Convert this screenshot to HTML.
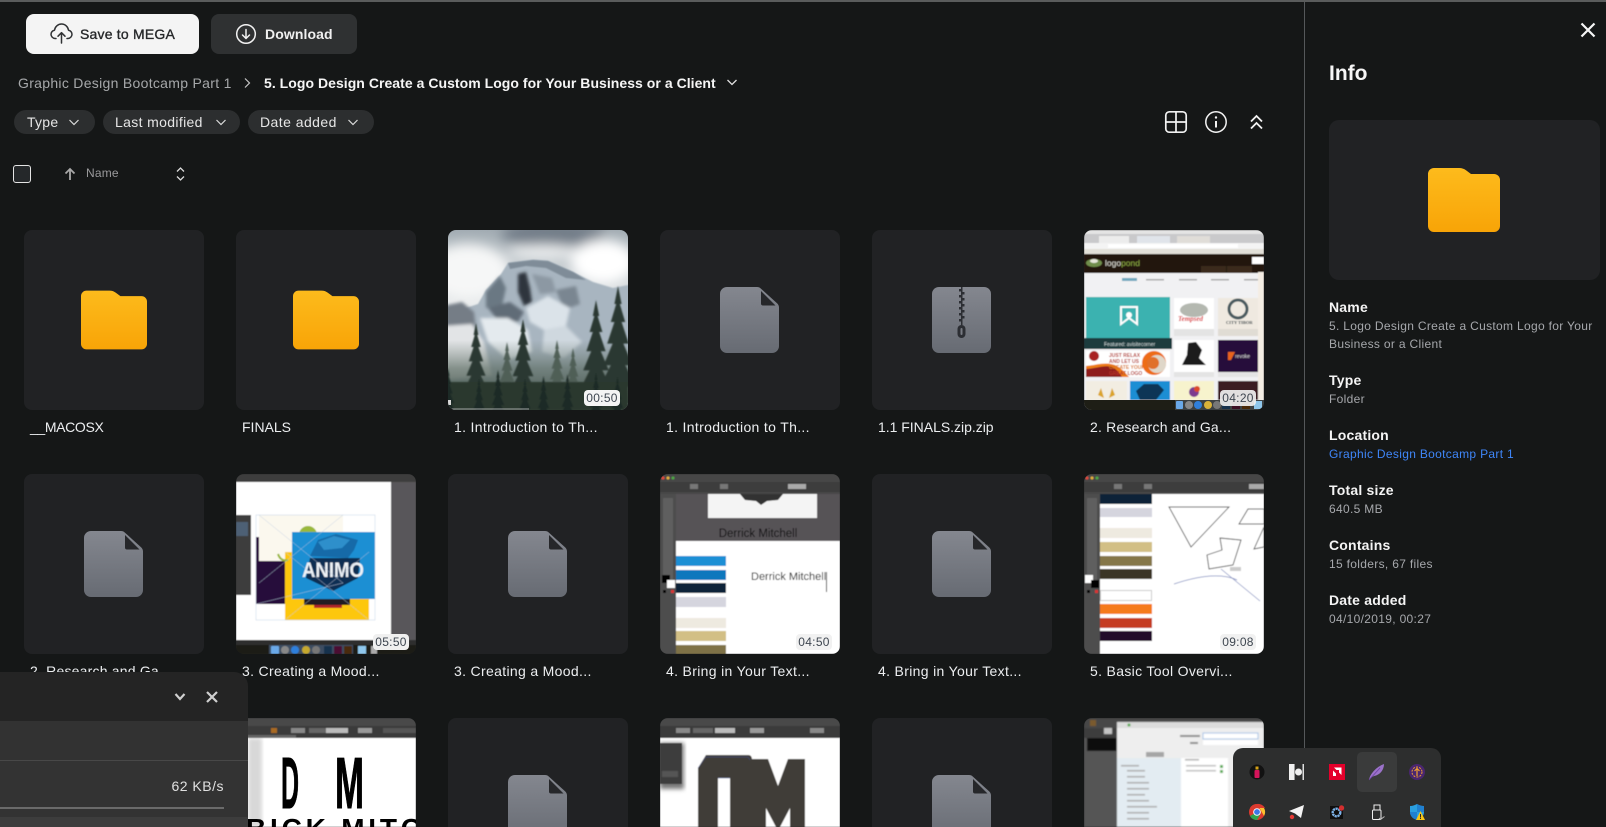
<!DOCTYPE html>
<html><head><meta charset="utf-8"><title>MEGA folder</title>
<style>
html,body{margin:0;padding:0;width:1606px;height:827px;overflow:hidden;background:#151717}
body{position:relative;font-family:"Liberation Sans",sans-serif;color:#eee}
.a{position:absolute}
.t{position:absolute;white-space:nowrap}
.tile{position:absolute;width:180px;height:180px;border-radius:8px;background:#212224;overflow:hidden}
.r3{height:109px;border-radius:8px 8px 0 0}
.tile svg.th{position:absolute;left:0;top:0;width:180px;height:180px}
.tile.r3 svg.th{height:109px}
.ic{position:absolute}
.lb{position:absolute;white-space:nowrap;font-size:14px;line-height:20px;color:#eceef0;letter-spacing:.33px}
.bd{position:absolute;width:36px;height:16px;border-radius:4px;font-size:12px;line-height:16px;text-align:center;color:#3e4650;background:#f4f4f4;letter-spacing:.3px}
.pill{position:absolute;top:110px;height:24px;border-radius:12px;background:#2c2e2f}
.pt{position:absolute;top:110px;line-height:24px;font-size:14px;color:#e6e6e6;letter-spacing:.45px;white-space:nowrap}
.il{position:absolute;left:1329px;font-size:14px;font-weight:700;line-height:18px;color:#f4f4f4;white-space:nowrap;letter-spacing:.2px}
.iv{position:absolute;left:1329px;font-size:12px;line-height:18px;color:#a6a8ac;white-space:nowrap;letter-spacing:.32px}
</style></head><body>
<svg width="0" height="0" style="position:absolute"><defs>
<linearGradient id="fo" x1="0" y1="0" x2="0" y2="1"><stop offset="0" stop-color="#fdbb1c"/><stop offset="1" stop-color="#f8a407"/></linearGradient>
<linearGradient id="fi" x1="0" y1="0" x2="0" y2="1"><stop offset="0" stop-color="#84878f"/><stop offset="1" stop-color="#676b73"/></linearGradient>
<linearGradient id="sky" x1="0" y1="0" x2="0" y2="1"><stop offset="0" stop-color="#a2acb3"/><stop offset=".4" stop-color="#e6e9ea"/></linearGradient>
<linearGradient id="fog" x1="0" y1="0" x2="0" y2="1"><stop offset="0" stop-color="#6b7a72" stop-opacity="0"/><stop offset=".4" stop-color="#5d6d64" stop-opacity=".7"/><stop offset="1" stop-color="#33423a"/></linearGradient>
<symbol id="folder" viewBox="0 0 72 64"><path fill="url(#fo)" d="M6 0H31c3 0 5 .8 7 2.3L43 6H66a6 6 0 0 1 6 6V58a6 6 0 0 1-6 6H6a6 6 0 0 1-6-6V6a6 6 0 0 1 6-6z"/></symbol>
<symbol id="file" viewBox="0 0 59 66"><path fill="url(#fi)" d="M7 0H37c1.500 0 3 .6 4 1.700L57.300 16.500c1.100 1.100 1.700 2.500 1.700 4V59a7 7 0 0 1-7 7H7a7 7 0 0 1-7-7V7a7 7 0 0 1 7-7z"/><path fill="#26272a" d="M41 4L55.500 18.500H43a2 2 0 0 1-2-2z"/></symbol>
<symbol id="tree" viewBox="0 0 20 60"><polygon points="10,0 12,10 11,10 14,20 12,20 16,32 13,32 18,44 14,44 20,56 11,56 11,60 9,60 9,56 0,56 6,44 2,44 7,32 4,32 8,20 6,20 9,10 8,10"/></symbol>
<filter id="b1"><feGaussianBlur stdDeviation="6"/></filter>
<filter id="b2"><feGaussianBlur stdDeviation="2"/></filter>
<filter id="b3"><feGaussianBlur stdDeviation=".45"/></filter>
<filter id="b4"><feGaussianBlur stdDeviation=".8"/></filter>
<filter id="b5"><feGaussianBlur stdDeviation="1.700"/></filter>
<filter id="b6"><feGaussianBlur stdDeviation=".7"/></filter>
</defs></svg>

<!-- top line and divider -->
<div class="a" style="left:0;top:0;width:1606px;height:2px;background:#5a5c5c"></div>
<div class="a" style="left:1304px;top:2px;width:1px;height:825px;background:#55585a"></div>

<!-- header buttons -->
<div class="a" style="left:26px;top:14px;width:173px;height:40px;border-radius:8px;background:#f4f4f4"></div>
<svg class="ic" style="left:50px;top:23px" width="23" height="21" viewBox="0 0 23 21" fill="none" stroke="#303234" stroke-width="1.500" stroke-linecap="round" stroke-linejoin="round"><path d="M6 15.500H5.200C2.900 15.500 1 13.600 1 11.300c0-2 1.500-3.800 3.500-4.100C5 3.700 8 1 11.500 1c3.600 0 6.500 2.700 7 6.200 2 .3 3.500 2.100 3.500 4.100 0 2.300-1.900 4.200-4.200 4.200H17"/><path d="M11.500 20V10M8 13.200l3.500-3.500 3.500 3.500"/></svg>
<div class="t" style="left:80px;top:24px;font-size:14px;line-height:20px;color:#26282a;letter-spacing:.2px;-webkit-text-stroke:.35px #26282a">Save to MEGA</div>
<div class="a" style="left:211px;top:14px;width:146px;height:40px;border-radius:8px;background:#2f3132"></div>
<svg class="ic" style="left:235px;top:23px" width="22" height="22" viewBox="0 0 22 22" fill="none" stroke="#f2f2f2" stroke-width="1.500" stroke-linecap="round" stroke-linejoin="round"><circle cx="11" cy="11" r="9.300"/><path d="M11 6.500V15.500M7.500 12l3.500 3.500 3.500-3.500"/></svg>
<div class="t" style="left:265px;top:24px;font-size:14px;font-weight:700;line-height:20px;color:#f0f0f0;letter-spacing:.1px">Download</div>

<!-- breadcrumb -->
<div class="t" style="left:18px;top:73px;font-size:14px;line-height:20px;color:#a6a8aa;letter-spacing:.3px">Graphic Design Bootcamp Part 1</div>
<svg class="ic" style="left:243px;top:77px" width="9" height="12" viewBox="0 0 9 12" fill="none" stroke="#c8c8c8" stroke-width="1.200"><path d="M2 1.500L6.500 6 2 10.500"/></svg>
<div class="t" style="left:264px;top:73px;font-size:14px;font-weight:700;line-height:20px;color:#f6f6f6;letter-spacing:.04px">5. Logo Design Create a Custom Logo for Your Business or a Client</div>
<svg class="ic" style="left:726px;top:78px" width="12" height="9" viewBox="0 0 12 9" fill="none" stroke="#e0e0e0" stroke-width="1.300"><path d="M1.500 2L6 6.500 10.500 2"/></svg>

<!-- filter pills -->
<div class="pill" style="left:14px;width:81px"></div>
<div class="pill" style="left:103px;width:137px"></div>
<div class="pill" style="left:248px;width:126px"></div>
<div class="pt" style="left:27px;letter-spacing:.25px">Type</div>
<div class="pt" style="left:115px;letter-spacing:.35px">Last modified</div>
<div class="pt" style="left:260px">Date added</div>
<svg class="ic" style="left:68px;top:118px" width="12" height="9" viewBox="0 0 12 9" fill="none" stroke="#dcdcdc" stroke-width="1.200"><path d="M1.500 2L6 6.500 10.500 2"/></svg>
<svg class="ic" style="left:215px;top:118px" width="12" height="9" viewBox="0 0 12 9" fill="none" stroke="#dcdcdc" stroke-width="1.200"><path d="M1.500 2L6 6.500 10.500 2"/></svg>
<svg class="ic" style="left:347px;top:118px" width="12" height="9" viewBox="0 0 12 9" fill="none" stroke="#dcdcdc" stroke-width="1.200"><path d="M1.500 2L6 6.500 10.500 2"/></svg>

<!-- view icons -->
<svg class="ic" style="left:1164px;top:110px" width="24" height="24" viewBox="0 0 24 24" fill="none" stroke="#f2f2f2" stroke-width="1.700"><rect x="1.800" y="1.800" width="20.400" height="20.400" rx="3.500"/><path d="M12 2V22M2 12H22"/></svg>
<svg class="ic" style="left:1204px;top:110px" width="24" height="24" viewBox="0 0 24 24" fill="none" stroke="#f2f2f2" stroke-width="1.500"><circle cx="12" cy="12" r="10.200"/><path d="M12 11V17.500" stroke-width="2"/><circle cx="12" cy="7.500" r="1.200" fill="#f2f2f2" stroke="none"/></svg>
<svg class="ic" style="left:1249px;top:114px" width="15" height="16" viewBox="0 0 15 16" fill="none" stroke="#f2f2f2" stroke-width="1.800"><path d="M2 7.500L7.500 2 13 7.500M2 14.500L7.500 9 13 14.500"/></svg>

<!-- checkbox & sort -->
<div class="a" style="left:13px;top:165px;width:16px;height:16px;border:1px solid #e4e4e4;border-radius:3px;background:#25282a"></div>
<svg class="ic" style="left:63px;top:167px" width="14" height="14" viewBox="0 0 14 14" fill="none" stroke="#a8a8a8" stroke-width="1.800"><path d="M7 13V2M2.500 6.500L7 2l4.500 4.500"/></svg>
<div class="t" style="left:86px;top:165px;font-size:12px;line-height:16px;color:#9a9a9c;letter-spacing:.2px">Name</div>
<svg class="ic" style="left:175px;top:166px" width="11" height="16" viewBox="0 0 11 16" fill="none" stroke="#dcdcdc" stroke-width="1.300"><path d="M2 5.500L5.500 2 9 5.500M2 10.500L5.500 14 9 10.500"/></svg>

<!-- ROW 1 -->
<div class="tile" style="left:24px;top:230px"><svg class="ic" style="left:57px;top:60px" width="66" height="60"><use href="#folder"/></svg></div>
<div class="lb" style="left:30px;top:417px;letter-spacing:-.35px">__MACOSX</div>
<div class="tile" style="left:236px;top:230px"><svg class="ic" style="left:57px;top:60px" width="66" height="60"><use href="#folder"/></svg></div>
<div class="lb" style="left:242px;top:417px;letter-spacing:0">FINALS</div>

<div class="tile" style="left:448px;top:230px">
<svg class="th" viewBox="0 0 180 180">
<rect width="180" height="180" fill="url(#sky)"/>
<g filter="url(#b1)"><ellipse cx="20" cy="42" rx="42" ry="28" fill="#f6f7f7"/><ellipse cx="105" cy="4" rx="52" ry="13" fill="#727d88"/><ellipse cx="155" cy="32" rx="32" ry="22" fill="#fff"/><ellipse cx="95" cy="22" rx="35" ry="7" fill="#eef0f1"/></g>
<path d="M-5 88L18 78 30 74 38 60 53 44 60 33 85 30 100 31 125 42 145 52 165 58 185 54V180H-5z" fill="#a8b5c0" filter="url(#b6)"/>
<path d="M60 33L85 30 100 31 125 42 138 50 118 48 98 38 78 36 62 39z" fill="#7f8c98" filter="url(#b6)"/>
<g filter="url(#b5)">
<path d="M70 44L78 42 82 58 84 72 76 76 70 62z" fill="#2f363c"/>
<path d="M38 62L52 46 58 58 54 76 38 78z" fill="#6b7883"/>
<path d="M84 44L104 48 108 62 92 64z" fill="#8c98a3"/>
<path d="M108 60L128 56 132 74 116 80z" fill="#7a8691"/>
<path d="M40 78L62 72 76 82 70 92 48 88z" fill="#606c77"/>
<path d="M78 78L100 66 122 78 118 96 96 100 82 92z" fill="#dbe3e9"/>
<path d="M32 88L60 88 80 100 84 122 60 130 40 112z" fill="#e4eaee"/>
<path d="M96 100L118 96 134 112 116 128 94 122z" fill="#cfd8df"/>
<path d="M-5 76L14 72 26 82 28 100 -5 100z" fill="#747d86"/>
<path d="M-5 96L24 94 36 112 44 146 -5 150z" fill="#e2e4e6"/>
</g>
<rect y="110" width="180" height="70" fill="url(#fog)"/>
<g filter="url(#b6)">
<g fill="#4f5f56"><use href="#tree" x="50" y="112" width="18" height="54"/><use href="#tree" x="100" y="110" width="18" height="54"/><use href="#tree" x="116" y="118" width="18" height="54"/></g>
<g fill="#2a3932"><use href="#tree" x="16" y="88" width="24" height="82"/><use href="#tree" x="62" y="83" width="26" height="90"/><use href="#tree" x="132" y="64" width="32" height="108"/><use href="#tree" x="152" y="50" width="36" height="120"/></g>
<rect y="152" width="180" height="28" fill="#2a382f"/>
<g fill="#1f2c27"><use href="#tree" x="-8" y="138" width="16" height="48"/><use href="#tree" x="24" y="148" width="14" height="42"/><use href="#tree" x="42" y="140" width="16" height="48"/><use href="#tree" x="70" y="148" width="14" height="42"/><use href="#tree" x="88" y="146" width="15" height="44"/><use href="#tree" x="112" y="144" width="15" height="45"/><use href="#tree" x="140" y="142" width="16" height="48"/><use href="#tree" x="162" y="146" width="15" height="44"/></g>
</g>
<rect x="0" y="170" width="3" height="5" fill="#d8d8d8"/><rect x="2" y="178.500" width="79" height="1" fill="#a0a4a4"/>
</svg></div>
<div class="bd" style="left:584px;top:390px">00:50</div>
<div class="lb" style="left:454px;top:417px">1. Introduction to Th...</div>

<div class="tile" style="left:660px;top:230px"><svg class="ic" style="left:60px;top:57px" width="59" height="66"><use href="#file"/></svg></div>
<div class="lb" style="left:666px;top:417px">1. Introduction to Th...</div>

<div class="tile" style="left:872px;top:230px"><svg class="ic" style="left:60px;top:57px" width="59" height="66" viewBox="0 0 59 66"><rect width="59" height="66" rx="7" fill="url(#fi)"/><rect x="29" y="0" width="1.500" height="38" fill="#2c2e33"/><g fill="#2c2e33"><rect x="27" y="2" width="2" height="2.500"/><rect x="30.500" y="5" width="2" height="2.500"/><rect x="27" y="8" width="2" height="2.500"/><rect x="30.500" y="11" width="2" height="2.500"/><rect x="27" y="14" width="2" height="2.500"/><rect x="30.500" y="17" width="2" height="2.500"/><rect x="27" y="20" width="2" height="2.500"/><rect x="30.500" y="23" width="2" height="2.500"/><rect x="27" y="26" width="2" height="2.500"/><rect x="30.500" y="29" width="2" height="2.500"/><rect x="27" y="32" width="2" height="2.500"/></g><rect x="25.500" y="38" width="8" height="13" rx="4" fill="#2c2e33"/><rect x="28.500" y="41" width="2" height="7" rx="1" fill="#777a82"/></svg></div>
<div class="lb" style="left:878px;top:417px;letter-spacing:-.02px">1.1 FINALS.zip.zip</div>

<div class="tile" style="left:1084px;top:230px">
<svg class="th" viewBox="0 0 180 180"><g filter="url(#b3)">
<rect width="180" height="180" fill="#f1f1f3"/>
<rect width="180" height="4" fill="#e4e4e4"/><rect y="4" width="180" height="9" fill="#c9c9cb"/><rect x="15" y="6" width="30" height="7" fill="#ececec"/><rect x="53" y="6" width="33" height="7" fill="#e0e4ea"/><rect x="93" y="6" width="33" height="7" fill="#e0ddd8"/>
<rect y="13" width="180" height="6" fill="#f4f4f4"/><rect x="24" y="14" width="130" height="4" fill="#fff"/><rect y="19" width="180" height="5" fill="#e2e0d8"/>
<rect y="24" width="180" height="19" fill="#221509"/><ellipse cx="10" cy="33" rx="8" ry="4" fill="#6f8e4c"/><ellipse cx="10" cy="31" rx="4" ry="2" fill="#e6e6da"/>
<text x="21" y="36" font-size="8.500" fill="#dcdcd4" font-family="Liberation Sans">logo<tspan fill="#8aa845">pond</tspan></text>
<rect x="168" y="27" width="12" height="7" fill="#fff"/><rect x="117" y="36" width="25" height="7" fill="#3a2b1c"/><rect x="143" y="36" width="25" height="7" fill="#3a2b1c"/>
<rect x="38" y="48" width="15" height="3" fill="#6fa9bf"/><rect x="62" y="49" width="18" height="1.500" fill="#aaa"/><rect x="95" y="49" width="18" height="1.500" fill="#aaa"/><rect x="127" y="49" width="18" height="1.500" fill="#aaa"/><rect x="160" y="49" width="18" height="1.500" fill="#aaa"/>
<rect x="2" y="67" width="84" height="52" fill="#3ab2b0"/><path d="M37 77H53V94L45 88 37 94z" fill="none" stroke="#fff" stroke-width="2"/><circle cx="45" cy="85" r="3" fill="#fff"/>
<rect x="0" y="108" width="88" height="11" fill="#1e3a3c"/><text x="20" y="116" font-size="5" fill="#cfdcdc" font-family="Liberation Sans">Featured: avisitecorner</text>
<rect x="90" y="68" width="40" height="31" fill="#fff"/><rect x="90" y="99" width="40" height="7" fill="#e4e4e4"/><ellipse cx="110" cy="80" rx="14" ry="7" fill="#b4b8b0"/><text x="94" y="91" font-size="7" font-weight="700" fill="#d92027" font-family="Liberation Serif" font-style="italic">Tempsed</text>
<rect x="134" y="68" width="40" height="31" fill="#efe9e0"/><rect x="134" y="99" width="40" height="7" fill="#e0dcd4"/><circle cx="154" cy="79" r="9" fill="none" stroke="#4a5a5e" stroke-width="3"/><text x="142" y="94" font-size="4.500" font-weight="700" fill="#2c3a40" font-family="Liberation Serif">CITY TIBOR</text>
<rect x="2" y="121" width="84" height="26" fill="#fff"/><path d="M2 147V136C20 138 26 128 40 147z" fill="#8e1e1e"/><path d="M2 136C20 134 30 128 45 147H38C28 130 18 138 2 139z" fill="#ee7d16"/><circle cx="10" cy="126" r="5" fill="#a82323"/><text x="25" y="127" font-size="5" font-weight="700" fill="#b5332a" font-family="Liberation Sans">JUST RELAX</text><text x="25" y="133" font-size="5" font-weight="700" fill="#b5332a" font-family="Liberation Sans">AND LET US</text><text x="25" y="139" font-size="5" font-weight="700" fill="#d8731e" font-family="Liberation Sans">CREATE YOUR</text><text x="25" y="145" font-size="5" font-weight="700" fill="#b5332a" font-family="Liberation Sans">GREAT LOGO</text>
<ellipse cx="70" cy="133" rx="12" ry="12" fill="#ed6c17"/><circle cx="73" cy="134" r="9" fill="#dfd7c9"/><circle cx="69" cy="133" r="6" fill="#e0702a"/>
<rect x="90" y="110" width="40" height="32" fill="#fff"/><rect x="90" y="142" width="40" height="5" fill="#e4e4e4"/><path d="M104 113L112 112 118 120 115 128 122 135H98L103 125z" fill="#1e1e1e"/>
<rect x="134" y="110" width="40" height="32" fill="#25103a"/><rect x="134" y="142" width="40" height="5" fill="#e4e4e4"/><path d="M144 122H151L147 130H144z" fill="#e8631e"/><text x="151" y="128" font-size="5" fill="#ddd" font-family="Liberation Sans">revoke</text>
<rect x="2" y="151" width="41" height="19" fill="#f2ede2"/><path d="M17 158L14 165 20 168zM28 158L31 165 25 168z" fill="#dba42a"/>
<rect x="46" y="151" width="40" height="19" fill="#1a8ed4"/><path d="M52 161L60 154 74 154 80 160 72 170H56z" fill="#0f3456"/>
<rect x="90" y="151" width="40" height="19" fill="#f7f3cd"/><circle cx="110" cy="162" r="5" fill="#7b3b8f"/><circle cx="113" cy="159" r="3" fill="#db4a2b"/>
<rect x="134" y="151" width="40" height="19" fill="#3a1e24"/>
<rect x="174" y="42" width="6" height="128" fill="#f4ede4"/>
</g>
<rect y="170" width="180" height="10" fill="#1e1e16"/><rect x="91" y="170" width="89" height="10" fill="#3d4142"/>
<rect x="92" y="171" width="7" height="8" rx="1" fill="#6aa9e8"/><circle cx="105" cy="175" r="4" fill="#888"/><circle cx="114" cy="175" r="4" fill="#2f7fdb"/><circle cx="124" cy="175" r="4" fill="#d9b239"/><circle cx="133" cy="175" r="4" fill="#777"/><rect x="138" y="171" width="8" height="8" fill="#17334e"/><rect x="148" y="171" width="8" height="8" fill="#3c1024"/><rect x="158" y="171" width="8" height="8" fill="#4a2a08"/><rect x="170" y="171" width="8" height="8" fill="#8fc7ec"/>
</svg></div>
<div class="bd" style="left:1220px;top:390px;background:rgba(240,240,240,.92)">04:20</div>
<div class="lb" style="left:1090px;top:417px;letter-spacing:.2px">2. Research and Ga...</div>

<!-- ROW 2 -->
<div class="tile" style="left:24px;top:474px"><svg class="ic" style="left:60px;top:57px" width="59" height="66"><use href="#file"/></svg></div>
<div class="lb" style="left:30px;top:661px;letter-spacing:.2px">2. Research and Ga...</div>

<div class="tile" style="left:236px;top:474px">
<svg class="th" viewBox="0 0 180 180"><g filter="url(#b3)">
<rect width="180" height="8" fill="#3c3c3c"/><rect y="8" width="155" height="159" fill="#fff"/><rect x="155" y="8" width="25" height="159" fill="#59565a"/>
<rect x="0" y="41" width="15" height="80" fill="#3c3c3e"/><rect x="0" y="48" width="12" height="14" fill="#4d6074"/>
<rect x="23" y="41" width="84" height="68" fill="#fbf8ee"/><rect x="20" y="63" width="30" height="67" fill="#25103a"/><rect x="23" y="41" width="84" height="46" fill="#fbf8ee"/><rect x="49" y="78" width="84" height="68" fill="#fdc70c"/><rect x="23" y="109" width="26" height="21" fill="#25103a"/>
<ellipse cx="72" cy="61" rx="9" ry="9" fill="#9ab83a"/><path d="M42 80C44 86 48 87 52 86" stroke="#9ab83a" stroke-width="2" fill="none"/>
<rect x="56" y="58" width="83" height="67" fill="#1b8fd3"/>
<path d="M74 84L70 104 97 117 122 104 124 84z" fill="#0f2d52"/><path d="M74 82L82 66 100 60 122 66 118 76 112 84z" fill="#146aa8"/><path d="M82 68L98 62 114 66 106 74 88 76z" fill="#2f8fcb"/>
<text x="97" y="103" text-anchor="middle" font-size="21" font-weight="700" fill="#eef2f6" font-family="Liberation Sans" textLength="62" lengthAdjust="spacingAndGlyphs">ANIMO</text>
<rect x="68" y="125" width="46" height="6" fill="#231f20"/><rect x="78" y="131" width="28" height="3" fill="#b0272c"/>
<g stroke="#b6c8e0" stroke-width=".4" fill="none"><rect x="20" y="41" width="119" height="105"/><path d="M23 41L107 109M107 41L23 109M49 78L133 146M133 78L49 146M20 130L107 109"/></g>
<rect y="166" width="180" height="14" fill="#2e2e2e"/><rect y="171" width="180" height="9" fill="#1a1a14"/><rect x="33" y="171" width="84" height="9" fill="#3d4e62"/>
<rect x="35" y="172" width="8" height="8" rx="1" fill="#6aa9e8"/><circle cx="49" cy="176" r="4" fill="#888"/><circle cx="59" cy="176" r="4" fill="#2f7fdb"/><circle cx="70" cy="176" r="4" fill="#c6a92f"/><circle cx="80" cy="176" r="4" fill="#777"/><rect x="88" y="172" width="8" height="8" fill="#17334e"/><rect x="98" y="172" width="8" height="8" fill="#4c1030"/><rect x="108" y="172" width="8" height="8" fill="#4a2a08"/><rect x="122" y="172" width="8" height="8" fill="#8fc7ec"/><rect x="135" y="172" width="6" height="8" fill="#aaa"/>
</g></svg></div>
<div class="bd" style="left:373px;top:634px;background:#f0f0f0">05:50</div>
<div class="lb" style="left:242px;top:661px">3. Creating a Mood...</div>

<div class="tile" style="left:448px;top:474px"><svg class="ic" style="left:60px;top:57px" width="59" height="66"><use href="#file"/></svg></div>
<div class="lb" style="left:454px;top:661px">3. Creating a Mood...</div>

<div class="tile" style="left:660px;top:474px">
<svg class="th" viewBox="0 0 180 180"><g filter="url(#b3)">
<rect width="180" height="180" fill="#fff"/><rect y="20" width="180" height="47" fill="#565357"/>
<rect width="180" height="20" fill="#474747"/><rect y="8" width="180" height="10" fill="#3e3e3e"/><circle cx="3" cy="4" r="1.500" fill="#e4473b"/><circle cx="8" cy="4" r="1.500" fill="#e6b13a"/><circle cx="13" cy="4" r="1.500" fill="#4ea944"/><rect x="128" y="10" width="18" height="5" fill="#aaa"/><rect x="30" y="10" width="8" height="5" fill="#777"/><rect x="60" y="10" width="8" height="5" fill="#777"/>
<rect x="48" y="20" width="109" height="24" fill="#f4f4f4"/><path d="M80 20H123L118 26 107 27 101 31 96 27 85 26z" fill="#333"/>
<text x="98" y="63" text-anchor="middle" font-size="11.500" fill="#0c0c0c" font-family="Liberation Sans">Derrick Mitchell</text>
<rect x="0" y="20" width="16" height="160" fill="#4e4e4e"/><rect x="3" y="24" width="10" height="84" fill="#5f5f5f"/><rect x="2" y="101" width="8" height="8" fill="#000"/><rect x="7" y="106" width="8" height="8" fill="#fff"/><rect x="3" y="116" width="3" height="3" fill="#000"/><rect x="11" y="116" width="3" height="3" fill="#d33"/>
<rect x="16" y="82" width="50" height="10" fill="#1a8fd5"/><rect x="16" y="96" width="50" height="10" fill="#0c77bd"/><rect x="16" y="109" width="50" height="10" fill="#0b2238"/><rect x="16" y="123" width="50" height="10" fill="#d5d5de"/><rect x="16" y="144" width="50" height="10" fill="#eeeae0"/><rect x="16" y="157" width="50" height="10" fill="#d2bf85"/><rect x="16" y="171" width="50" height="9" fill="#7f7247"/>
<text x="91" y="106" font-size="11" fill="#0c0c0c" font-family="Liberation Sans">Derrick Mitchell</text>
<rect x="166" y="98" width="1" height="20" fill="#222"/>
</g></svg></div>
<div class="bd" style="left:796px;top:634px;background:#f1f1f1">04:50</div>
<div class="lb" style="left:666px;top:661px">4. Bring in Your Text...</div>

<div class="tile" style="left:872px;top:474px"><svg class="ic" style="left:60px;top:57px" width="59" height="66"><use href="#file"/></svg></div>
<div class="lb" style="left:878px;top:661px">4. Bring in Your Text...</div>

<div class="tile" style="left:1084px;top:474px">
<svg class="th" viewBox="0 0 180 180"><g filter="url(#b3)">
<rect width="180" height="180" fill="#fff"/>
<rect width="180" height="20" fill="#474747"/><rect y="8" width="180" height="10" fill="#3e3e3e"/><circle cx="3" cy="4" r="1.500" fill="#e4473b"/><circle cx="8" cy="4" r="1.500" fill="#e6b13a"/><circle cx="13" cy="4" r="1.500" fill="#4ea944"/><rect x="165" y="10" width="15" height="5" fill="#aaa"/><rect x="30" y="10" width="8" height="5" fill="#777"/><rect x="60" y="10" width="8" height="5" fill="#777"/>
<rect x="0" y="20" width="16" height="160" fill="#4e4e4e"/><rect x="3" y="24" width="10" height="84" fill="#5f5f5f"/><rect x="1" y="101" width="8" height="8" fill="#fff"/><rect x="7" y="106" width="8" height="8" fill="#000"/><rect x="3" y="116" width="3" height="3" fill="#000"/><rect x="11" y="116" width="3" height="3" fill="#d33"/>
<rect x="16" y="20" width="52" height="10" fill="#0b2238"/><rect x="16" y="34" width="52" height="9" fill="#d5d5de"/><rect x="16" y="54" width="52" height="10" fill="#eeeae0"/><rect x="16" y="68" width="52" height="10" fill="#d2bf85"/><rect x="16" y="82" width="52" height="10" fill="#85774a"/><rect x="16" y="95" width="52" height="10" fill="#3a3428"/><rect x="16.500" y="116.500" width="51" height="10" fill="#fff" stroke="#ccc"/><rect x="16" y="130" width="52" height="10" fill="#f57a1a"/><rect x="16" y="144" width="52" height="10" fill="#c53a22"/><rect x="16" y="157" width="52" height="10" fill="#22102a"/>
<g fill="none" stroke="#555" stroke-width=".9"><path d="M85 33H145L107 73z"/><path d="M164 35H180V50H155z"/><path d="M180 53L170 75 180 73z"/><path d="M136 64L157 66 149 91 125 95 123 81 138 76z"/></g>
<g fill="none" stroke="#7f8cc0" stroke-width=".7"><path d="M90 110C120 100 140 100 153 106"/><path d="M137 95L176 127"/></g>
<rect x="146" y="93" width="11" height="4" fill="#ccc"/>
</g></svg></div>
<div class="bd" style="left:1220px;top:634px;background:#f1f1f1">09:08</div>
<div class="lb" style="left:1090px;top:661px">5. Basic Tool Overvi...</div>

<!-- ROW 3 -->
<div class="tile r3" style="left:24px;top:718px"></div>
<div class="tile r3" style="left:236px;top:718px">
<svg class="th" viewBox="0 0 180 109"><g filter="url(#b3)">
<rect width="180" height="109" fill="#fff"/><rect x="12" y="20" width="14" height="89" fill="#d8d8d8" filter="url(#b2)"/>
<rect width="180" height="8" fill="#484848"/><rect y="8" width="180" height="12" fill="#3b3b3b"/><rect y="17" width="60" height="3" fill="#666"/>
<rect x="35" y="10" width="6" height="5" fill="#a86a24"/><rect x="55" y="10" width="14" height="5" fill="#888"/><rect x="73" y="10" width="20" height="5" fill="#666"/><rect x="90" y="10" width="22" height="5" fill="#bbb"/><rect x="122" y="10" width="14" height="5" fill="#999"/><rect x="147" y="10" width="33" height="5" fill="#555"/>
</g>
<text x="45" y="90" font-size="72" font-weight="700" font-family="Liberation Sans" fill="#000" stroke="#000" stroke-width="1" textLength="18" lengthAdjust="spacingAndGlyphs">D</text>
<text x="99" y="90" font-size="72" font-weight="700" font-family="Liberation Sans" fill="#000" stroke="#000" stroke-width="1" textLength="29" lengthAdjust="spacingAndGlyphs">M</text>
<text x="10" y="120" font-size="28" font-weight="700" font-family="Liberation Sans" fill="#000" textLength="175" lengthAdjust="spacing">BICK MITC</text>
</svg></div>
<div class="tile r3" style="left:448px;top:718px"><svg class="ic" style="left:60px;top:57px" width="59" height="52" viewBox="0 0 59 52"><use href="#file" width="59" height="66"/></svg></div>
<div class="tile r3" style="left:660px;top:718px">
<svg class="th" viewBox="0 0 180 109"><g filter="url(#b3)">
<rect width="180" height="109" fill="#fff"/><rect width="180" height="8" fill="#484848"/><rect y="8" width="180" height="12" fill="#3b3b3b"/>
<rect x="16" y="10" width="14" height="5" fill="#888"/><rect x="33" y="10" width="20" height="5" fill="#666"/><rect x="55" y="10" width="20" height="5" fill="#bbb"/><rect x="90" y="10" width="14" height="5" fill="#999"/><rect x="150" y="10" width="14" height="5" fill="#888"/>
<rect x="0" y="25" width="24" height="46" fill="#777" filter="url(#b2)"/><rect x="0" y="25" width="22" height="41" fill="#3e3e3e"/><rect x="2" y="53" width="16" height="6" fill="#555"/>
<path d="M38 50L46 37H88C91 37 92 39 92 42V109H38z" fill="#413c38"/><rect x="58" y="60" width="12" height="49" fill="#fff"/><path d="M92 41H108L118 68 128 41H145V109H130V90L120 109H116L106 90V109H92z" fill="#413c38"/>
<g fill="none" stroke="#4358a8" stroke-width=".4"><path d="M38 50L46 39H88L90 42M58 60H70"/></g>
</g></svg></div>
<div class="tile r3" style="left:872px;top:718px"><svg class="ic" style="left:60px;top:57px" width="59" height="52" viewBox="0 0 59 52"><use href="#file" width="59" height="66"/></svg></div>
<div class="tile r3" style="left:1084px;top:718px">
<svg class="th" viewBox="0 0 180 109"><g filter="url(#b4)">
<rect width="180" height="109" fill="#555"/><rect width="180" height="10" fill="#474747"/><rect y="10" width="180" height="10" fill="#3e3e3e"/><rect x="6" y="2" width="6" height="6" fill="#7a5a2e"/><rect x="20" y="10" width="8" height="6" fill="#c4c4c4"/>
<rect x="3" y="20" width="30" height="13" fill="#111"/>
<rect x="33" y="4" width="147" height="105" fill="#eeeeee"/><rect x="33" y="4" width="147" height="6" fill="#dcdcdc"/><circle cx="45" cy="7" r="1.500" fill="#4ea944"/>
<rect x="119" y="15" width="55" height="6" fill="#fff" stroke="#8db4e2" stroke-width=".8"/><rect x="119" y="22" width="55" height="5" fill="#fff"/><rect x="96" y="17" width="20" height="2" fill="#888"/><rect x="106" y="24" width="8" height="2" fill="#888"/>
<rect x="33" y="40" width="64" height="69" fill="#e3ecf2"/><rect x="97" y="40" width="47" height="69" fill="#fff"/><rect x="62" y="34" width="18" height="5" fill="#a5a5a5"/>
<g fill="#a8a8a8"><rect x="37" y="47" width="18" height="1.500"/><rect x="43" y="52" width="18" height="1.500"/><rect x="43" y="58" width="18" height="1.500"/><rect x="43" y="64" width="22" height="1.500"/><rect x="43" y="70" width="22" height="1.500"/><rect x="43" y="76" width="18" height="1.500"/><rect x="43" y="82" width="22" height="1.500"/><rect x="43" y="88" width="30" height="1.500"/><rect x="43" y="94" width="22" height="1.500"/><rect x="43" y="100" width="22" height="1.500"/></g>
<rect x="101" y="41" width="14" height="1.500" fill="#aaa"/><rect x="102" y="47" width="30" height="1.500" fill="#bbb"/><rect x="102" y="52" width="30" height="1.500" fill="#bbb"/><rect x="136" y="47" width="3" height="3" fill="#4ea944"/><rect x="136" y="52" width="3" height="3" fill="#4ea944"/>
</g></svg></div>

<!-- INFO PANEL -->
<svg class="ic" style="left:1580px;top:22px" width="16" height="16" viewBox="0 0 16 16" fill="none" stroke="#f6f6f6" stroke-width="2.200"><path d="M1.500 1.500L14.500 14.500M14.500 1.500L1.500 14.500"/></svg>
<div class="t" style="left:1329px;top:61px;font-size:21px;font-weight:700;line-height:26px;color:#f6f6f6">Info</div>
<div class="a" style="left:1329px;top:120px;width:271px;height:160px;border-radius:10px;background:#212224"></div>
<svg class="ic" style="left:1428px;top:168px" width="72" height="64"><use href="#folder"/></svg>
<div class="il" style="top:298px">Name</div>
<div class="iv" style="top:317px">5. Logo Design Create a Custom Logo for Your</div>
<div class="iv" style="top:335px">Business or a Client</div>
<div class="il" style="top:371px">Type</div><div class="iv" style="top:390px">Folder</div>
<div class="il" style="top:426px">Location</div><div class="iv" style="top:445px;color:#3f86f8">Graphic Design Bootcamp Part 1</div>
<div class="il" style="top:481px">Total size</div><div class="iv" style="top:500px">640.5 MB</div>
<div class="il" style="top:536px">Contains</div><div class="iv" style="top:555px">15 folders, 67 files</div>
<div class="il" style="top:591px">Date added</div><div class="iv" style="top:610px">04/10/2019, 00:27</div>

<!-- TRANSFER PANEL -->
<div class="a" style="left:0;top:672px;width:248px;height:155px;background:#242424;border-top-right-radius:14px;overflow:hidden">
<div class="a" style="left:0;top:49px;width:248px;height:39px;background:#323232"></div>
<div class="a" style="left:0;top:88px;width:248px;height:1px;background:#484848"></div>
<div class="a" style="left:0;top:89px;width:248px;height:56px;background:#333"></div>
<div class="a" style="left:0;top:135px;width:224px;height:2px;background:#6a6a6a"></div>
<div class="a" style="left:0;top:145px;width:248px;height:10px;background:#3d3d3d"></div>
<div class="t" style="right:24px;top:104px;font-size:14px;line-height:20px;color:#e0e0e0;letter-spacing:.5px">62 KB/s</div>
<svg class="ic" style="left:174px;top:20px" width="12" height="10" viewBox="0 0 12 10" fill="none" stroke="#cfcfcf" stroke-width="2.200"><path d="M1.500 2L6 7 10.500 2"/></svg>
<svg class="ic" style="left:206px;top:19px" width="12" height="12" viewBox="0 0 12 12" fill="none" stroke="#cfcfcf" stroke-width="2.200"><path d="M1 1L11 11M11 1L1 11"/></svg>
</div>

<!-- TRAY -->
<div class="a" style="left:1233px;top:748px;width:208px;height:79px;background:#2d2e2e;border-radius:10px 10px 0 0"></div>
<div class="a" style="left:1357px;top:752px;width:40px;height:40px;background:#3a3b3b;border-radius:5px"></div>
<svg class="ic" style="left:1233px;top:748px" width="208" height="79" viewBox="0 0 208 79">
<circle cx="24" cy="24" r="7.500" fill="#121212"/><rect x="21.500" y="22" width="5" height="8" rx="1" fill="#d4145a"/><rect x="22.500" y="18.500" width="3" height="3" fill="#d4a017"/>
<rect x="56" y="16" width="5" height="16" fill="#f0f0f0"/><rect x="61" y="16" width="1" height="16" fill="#999"/><circle cx="65.500" cy="24" r="3.500" fill="#f0f0f0"/><rect x="69.500" y="16" width="1.500" height="16" fill="#ddd"/>
<rect x="96" y="16" width="16" height="16" fill="#e4002b"/><path d="M101 19.500H108.500V27L106 24.500V22H103.500zM100 22.500L103 25.500V28H100z" fill="#fff"/>
<path d="M136 32C137 26 143 19 151 16 151 22 147 27 141 28 139 29 137 30 136 32z" fill="#9b72c9"/><path d="M136 32L147 20" stroke="#6a3fa0" stroke-width=".8"/>
<circle cx="184" cy="24" r="8" fill="#4a2670"/><circle cx="184" cy="24" r="5" fill="none" stroke="#f0a030" stroke-width="1" stroke-dasharray="2 1.200"/><path d="M184 28V20.500M181.500 23L184 20.500 186.500 23" fill="none" stroke="#f0a030" stroke-width="1.200"/>
<circle cx="24" cy="64" r="8" fill="#db3a2f"/><path d="M24 64L17 68A8 8 0 0 0 24 72L28 65z" fill="#2ea44f"/><path d="M24 56A8 8 0 0 1 31 68L27 61z" fill="#fbc02d"/><path d="M24 56A8 8 0 0 0 17 60L20 64 24 60H32A8 8 0 0 0 24 56z" fill="#db3a2f"/><circle cx="24" cy="64" r="3.800" fill="#fff"/><circle cx="24" cy="64" r="2.900" fill="#3b78e7"/>
<path d="M56 63L71 57 68 70 62 65.500z" fill="#f4f4f4"/><circle cx="59" cy="69" r="2.200" fill="#e53935"/>
<rect x="97" y="58" width="13" height="13" fill="#0e0e0e"/><circle cx="103.500" cy="64.500" r="3.800" fill="none" stroke="#7db3e8" stroke-width="2.400" stroke-dasharray="2.200 .6"/><circle cx="108.500" cy="60" r="2.700" fill="#d32f2f"/>
<path d="M141 57h6v5h-6z" fill="none" stroke="#eee" stroke-width="1"/><rect x="139.500" y="62" width="8.500" height="9.500" rx="1" fill="none" stroke="#eee" stroke-width="1"/><path d="M146 70l1.500 1.500 4-3" fill="none" stroke="#bbb" stroke-width="1"/>
<path d="M177 58C180 58 182 57 184 56 186 57 188 58 191 58V64C191 68 188 71 184 72 180 71 177 68 177 64z" fill="#2a9fe0"/><path d="M184 56V72C180 71 177 68 177 64H191V58C188 58 186 57 184 56z" fill="#1a6cc4" opacity=".6"/><path d="M183 72L187.500 63 192 72z" fill="#f7c414"/><rect x="187" y="66" width="1" height="3.500" fill="#222"/><rect x="187" y="70" width="1" height="1" fill="#222"/>
</svg>
</body></html>
